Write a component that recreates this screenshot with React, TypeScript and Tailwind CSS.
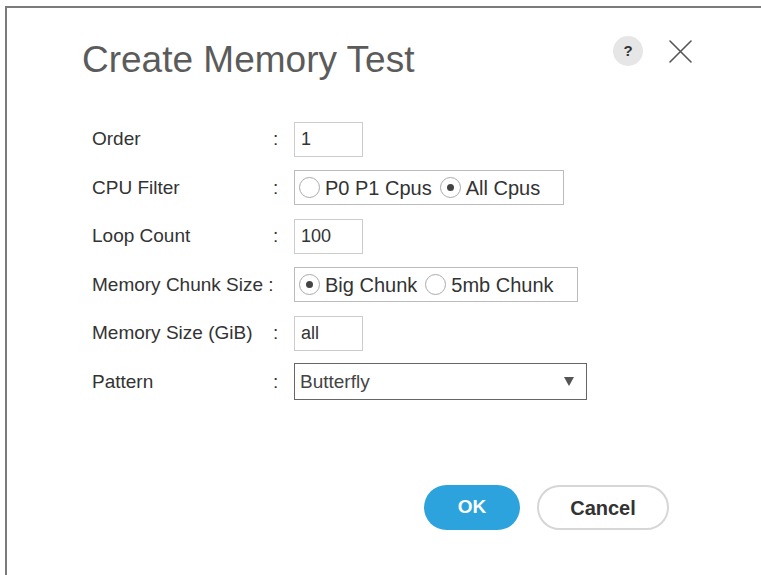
import React, { useState } from "react";

const font = { fontFamily: '"Liberation Sans", Arial, Helvetica, sans-serif' };

const Radio: React.FC<{ checked: boolean; label: string; onClick: () => void }> = ({ checked, label, onClick }) => {
    return (
        <button type="button" onClick={onClick} className="flex items-center gap-[5px] text-[20px] text-[#333]">
            <span className="w-[21px] h-[21px] rounded-full border border-[#aaa] bg-white flex items-center justify-center">
                {checked ? <span className="w-[7px] h-[7px] rounded-full bg-[#444]"></span> : <></>}
            </span>
            <span>{label}</span>
        </button>
    );
};

const Row: React.FC<{ label: string; inlineColon?: boolean; children: React.ReactNode }> = ({ label, inlineColon, children }) => {
    return (
        <div className="flex items-center h-[48.5px]">
            {inlineColon ? (
                <div className="w-[202px] text-[19px] text-[#333]">{label} :</div>
            ) : (
                <>
                    <div className="w-[181px] text-[19px] text-[#333]">{label}</div>
                    <div className="w-[21px] text-[19px] text-[#333]">:</div>
                </>
            )}
            {children}
        </div>
    );
};

const App: React.FC = () => {
    const [Order, SetOrder] = useState<string>("1");
    const [Loop, SetLoop] = useState<string>("100");
    const [Size, SetSize] = useState<string>("all");
    const [Cpu, SetCpu] = useState<string>("all");
    const [Chunk, SetChunk] = useState<string>("big");
    const [Pattern, SetPattern] = useState<string>("Butterfly");

    const inputCls = "w-[69px] h-[35px] border border-[#ccc] px-[6px] text-[18px] text-[#333] outline-none";

    return (
        <div className="w-[761px] h-[575px] bg-white pt-[6px] pl-[5px] flex" style={font}>
            <div className="flex-1 border-t-2 border-l-2 border-[#7b7b7b] flex flex-col">
                <div className="flex items-center justify-between pl-[75px] pr-[69px] pt-[33px]">
                    <h1 className="text-[37px] text-[#5b5b5b] leading-none">Create Memory Test</h1>
                    <div className="flex items-center gap-[26px] -mt-[17px]">
                        <span className="w-[30px] h-[30px] rounded-full bg-[#e6e6e6] flex items-center justify-center text-[15px] font-bold text-[#333]">?</span>
                        <svg width="23" height="23" viewBox="0 0 23 23" stroke="#555" strokeWidth="1.6" strokeLinecap="round">
                            <path d="M1 1 L22 22 M22 1 L1 22" />
                        </svg>
                    </div>
                </div>

                <div className="flex flex-col pl-[85px] mt-[37px]">
                    <Row label="Order">
                        <input className={inputCls} value={Order} onChange={(e) => { SetOrder(e.target.value) }} />
                    </Row>
                    <Row label="CPU Filter">
                        <div className="h-[35px] border border-[#bbb] flex items-center gap-[8px] pl-[4px] pr-[23px]">
                            <Radio checked={Cpu == "p0p1"} label="P0 P1 Cpus" onClick={() => { SetCpu("p0p1") }} />
                            <Radio checked={Cpu == "all"} label="All Cpus" onClick={() => { SetCpu("all") }} />
                        </div>
                    </Row>
                    <Row label="Loop Count">
                        <input className={inputCls} value={Loop} onChange={(e) => { SetLoop(e.target.value) }} />
                    </Row>
                    <Row label="Memory Chunk Size" inlineColon>
                        <div className="h-[35px] border border-[#bbb] flex items-center gap-[8px] pl-[4px] pr-[23px]">
                            <Radio checked={Chunk == "big"} label="Big Chunk" onClick={() => { SetChunk("big") }} />
                            <Radio checked={Chunk == "5mb"} label="5mb Chunk" onClick={() => { SetChunk("5mb") }} />
                        </div>
                    </Row>
                    <Row label="Memory Size (GiB)">
                        <input className={inputCls} value={Size} onChange={(e) => { SetSize(e.target.value) }} />
                    </Row>
                    <Row label="Pattern">
                        <div className="relative w-[293px] h-[37px] border border-[#666]">
                            <select value={Pattern} onChange={(e) => { SetPattern(e.target.value) }}
                                className="appearance-none w-full h-full bg-white px-[5px] text-[19px] text-[#444] outline-none">
                                <option>Butterfly</option>
                                <option>Random</option>
                                <option>Walking Ones</option>
                            </select>
                            <svg className="absolute right-[12px] top-[13px] pointer-events-none" width="10" height="9" viewBox="0 0 10 9">
                                <path d="M0 0 H10 L5 9 Z" fill="#555" />
                            </svg>
                        </div>
                    </Row>
                </div>

                <div className="flex justify-end gap-[17px] pr-[92px] mt-[79px]">
                    <button className="w-[96px] h-[45px] rounded-full bg-[#2ca3dd] text-white font-bold text-[19px]">OK</button>
                    <button className="w-[132px] h-[45px] rounded-full bg-white border-2 border-[#d6d6d6] text-[#333] font-bold text-[20px]">Cancel</button>
                </div>
            </div>
        </div>
    );
};

export default App;
